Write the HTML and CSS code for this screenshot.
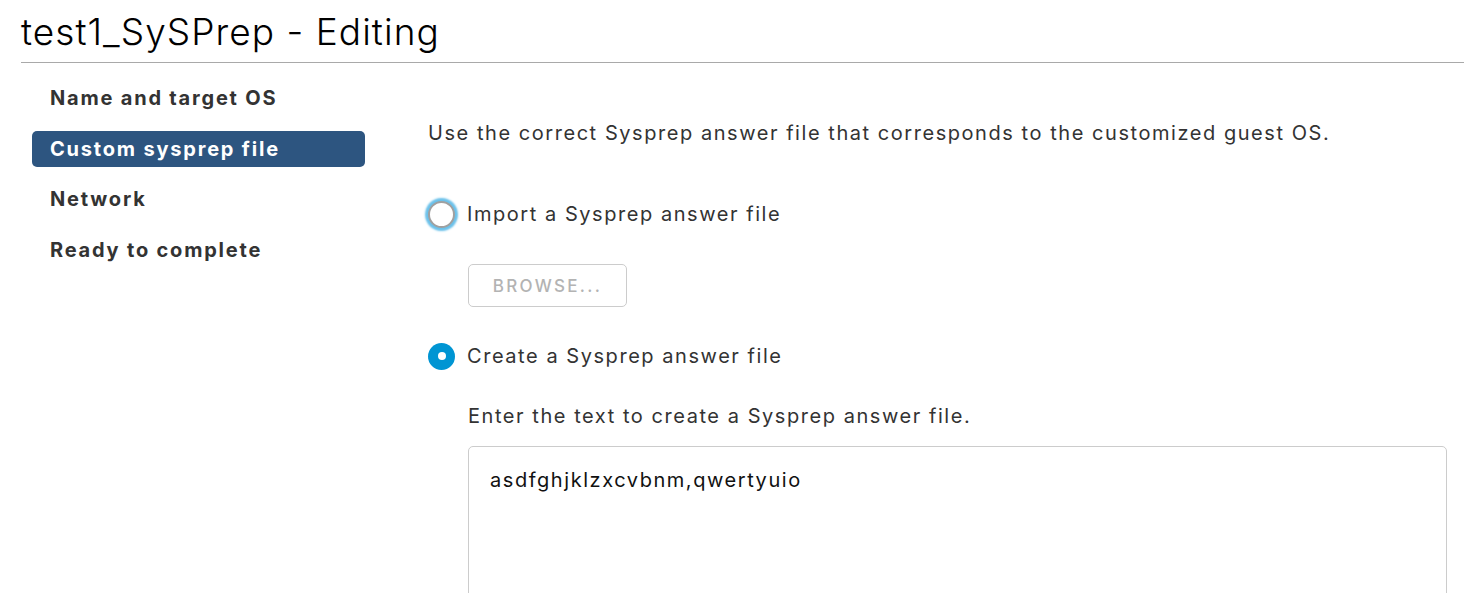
FILE: index.html
```html
<!DOCTYPE html>
<html lang="en">
<head>
<meta charset="utf-8">
<title>test1_SySPrep - Editing</title>
<link rel="stylesheet" href="styles.css">
</head>
<body>
<div class="page">
  <h1 class="title">test1_SySPrep - Editing</h1>
  <div class="wizard">
    <nav class="steps">
      <div class="step">Name and target OS</div>
      <div class="step active">Custom sysprep file</div>
      <div class="step">Network</div>
      <div class="step">Ready to complete</div>
    </nav>
    <main class="content">
      <p class="intro">Use the correct Sysprep answer file that corresponds to the customized guest OS.</p>
      <label class="radio-row first">
        <span class="radio focus"></span>
        <span class="radio-label">Import a Sysprep answer file</span>
      </label>
      <div class="sub">
        <button class="btn-browse" disabled>BROWSE...</button>
      </div>
      <label class="radio-row second">
        <span class="radio checked"></span>
        <span class="radio-label">Create a Sysprep answer file</span>
      </label>
      <div class="sub">
        <p class="hint">Enter the text to create a Sysprep answer file.</p>
        <div class="textarea">asdfghjklzxcvbnm,qwertyuio</div>
      </div>
    </main>
  </div>
</div>
</body>
</html>
```
FILE: styles.css
```css
html, body {
  margin: 0;
  padding: 0;
  background: #fff;
  overflow: hidden;
}
body {
  font-family: Inter, "Noto Sans", sans-serif;
  color: #333;
  letter-spacing: 1.55px;
}
.page {
  padding-left: 21px;
}
.title {
  margin: 0;
  font-size: 37px;
  font-weight: 300;
  color: #000;
  line-height: 64px;
  height: 63px;
  box-sizing: border-box;
  border-bottom: 1px solid #a9a9a9;
  letter-spacing: 1.05px;
}
.wizard {
  display: flex;
}
.steps {
  width: 333px;
  margin-left: 11px;
  padding-top: 17px;
  display: flex;
  flex-direction: column;
  gap: 14.7px;
  flex: none;
}
.step {
  height: 36px;
  line-height: 36px;
  padding-left: 18px;
  font-size: 20px;
  font-weight: 700;
  color: #333;
  border-radius: 5px;
  letter-spacing: 1.8px;
}
.step.active {
  background: #2d5580;
  color: #fff;
}
.content {
  margin-left: 63px;
  flex: 1;
  padding-top: 56px;
  padding-right: 17px;
}
.intro {
  margin: 0;
  font-size: 20px;
  line-height: 28px;
}
.radio-row {
  display: flex;
  align-items: center;
  gap: 12px;
  height: 30px;
}
.radio-row.first {
  margin-top: 52px;
}
.radio-row.second {
  margin-top: 34px;
}
.radio {
  width: 27px;
  height: 27px;
  border-radius: 50%;
  box-sizing: border-box;
  flex: none;
}
.radio.focus {
  border: 2px solid #a0a0a0;
  background: #fff;
  box-shadow: 0 0 2px 3px #6bc1ea;
}
.radio.checked {
  background: #0095d3;
  position: relative;
}
.radio.checked::after {
  content: "";
  position: absolute;
  left: 9.5px;
  top: 9.5px;
  width: 8px;
  height: 8px;
  border-radius: 50%;
  background: #fff;
}
.radio-label {
  font-size: 20px;
  color: #333;
}
.sub {
  padding-left: 40px;
}
.btn-browse {
  margin-top: 35px;
  width: 159px;
  height: 43px;
  border: 1px solid #ccc;
  border-radius: 5px;
  background: #fff;
  color: #b3b3b3;
  font-family: Inter, "Noto Sans", sans-serif;
  font-size: 17px;
  font-weight: 500;
  letter-spacing: 2.3px;
  padding: 0;
}
.hint {
  margin: 0;
  margin-top: 31px;
  font-size: 20px;
  line-height: 28px;
}
.textarea {
  margin-top: 16px;
  height: 200px;
  border: 1px solid #ccc;
  border-radius: 5px;
  padding: 20px 21px;
  font-size: 20px;
  color: #111;
  line-height: 26px;
}
```
